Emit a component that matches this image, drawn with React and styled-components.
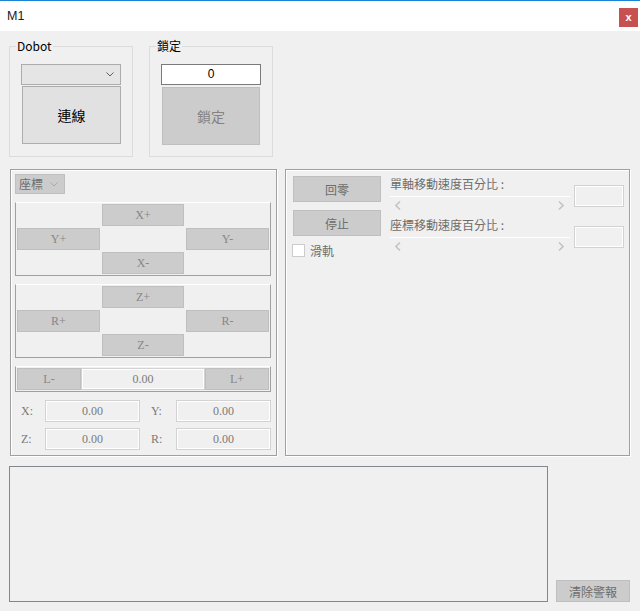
import React from 'react';
import styled, { createGlobalStyle } from 'styled-components';

const GlobalStyle = createGlobalStyle`
  * { box-sizing: border-box; }
  html, body {
    margin: 0;
    padding: 0;
    background: #f0f0f0;
  }
  body {
    font-family: "Noto Sans CJK TC", "Liberation Sans", sans-serif;
    font-size: 12px;
    color: #000;
  }
`;

const Window = styled.div`
  width: 640px;
  height: 611px;
  display: flex;
  flex-direction: column;
  overflow: hidden;
  background: #f0f0f0;
`;

const TitleBar = styled.div`
  flex: none;
  height: 31px;
  border-top: 1px solid #1883d7;
  background: #fff;
  display: flex;
  align-items: center;
  justify-content: space-between;
  padding: 0 2px 0 7px;
`;

const Title = styled.span`
  font-family: "Liberation Sans", sans-serif;
  font-size: 12.5px;
  color: #1a1a1a;
`;

const CloseButton = styled.button`
  width: 19px;
  height: 19px;
  margin-top: 3px;
  padding: 0;
  border: none;
  background: #c75050;
  color: #fff;
  font-family: "Liberation Sans", sans-serif;
  font-weight: bold;
  font-size: 11px;
  line-height: 19px;
`;

const Body = styled.div`
  flex: 1;
  display: flex;
  flex-direction: column;
  padding: 7px 10px 9px 9px;
`;

const TopRow = styled.div`
  display: flex;
  gap: 16px;
`;

const Group = styled.fieldset`
  width: 124px;
  margin: 0;
  padding: 0;
  min-width: 0;
  border: 1px solid #dcdcdc;
`;

const Legend = styled.legend`
  margin-left: 6px;
  padding: 0 1px;
  font-size: 12px;
  line-height: 16px;
`;

const GroupInner = styled.div`
  display: flex;
  flex-direction: column;
  padding: 10px 11px 11px 11px;
`;

const Combo = styled.div`
  width: ${p => p.$w || 100}px;
  height: ${p => p.$h || 21}px;
  display: flex;
  align-items: center;
  justify-content: space-between;
  padding: 0 6px 0 3px;
  background: ${p => (p.$disabled ? '#cccccc' : '#e5e5e5')};
  border: 1px solid ${p => (p.$disabled ? '#bfbfbf' : '#acacac')};
  color: #6d6d6d;
  font-size: 12px;
  line-height: 16px;
`;

const BigButton = styled.button`
  width: ${p => p.$w}px;
  height: 58px;
  margin: ${p => p.$m};
  padding: 0;
  font-family: "Noto Sans CJK TC", sans-serif;
  font-size: 14px;
  background: ${p => (p.disabled ? '#cccccc' : '#e1e1e1')};
  border: 1px solid ${p => (p.disabled ? '#bfbfbf' : '#adadad')};
  color: ${p => (p.disabled ? '#838383' : '#000')};
`;

const LockInput = styled.div`
  width: 100px;
  height: 21px;
  background: #fff;
  border: 1px solid #7a7a7a;
  text-align: center;
  font-family: "Liberation Sans", sans-serif;
  font-size: 12px;
  line-height: 19px;
`;

const MiddleRow = styled.div`
  display: flex;
  margin-top: 12px;
  height: 287px;
`;

const Panel = styled.div`
  width: ${p => p.$w}px;
  margin-left: ${p => p.$ml}px;
  border: 1px solid #a0a0a0;
  box-shadow: inset 1px 1px 0 #fff, 1px 1px 0 #fff;
  padding: ${p => p.$pad};
  display: flex;
  flex-direction: ${p => p.$dir || 'column'};
`;

const Inset = styled.div`
  border: 1px solid #a0a0a0;
  border-top-color: #fff;
  padding: 1px;
  margin-top: ${p => p.$mt}px;
`;

const Pad = styled.div`
  display: grid;
  grid-template-columns: 83px 82px 83px;
  grid-template-rows: repeat(3, 22px);
  gap: 2px;
`;

const JogButton = styled.button`
  grid-column: ${p => p.$col};
  grid-row: ${p => p.$row};
  width: ${p => (p.$w ? `${p.$w}px` : 'auto')};
  height: 22px;
  padding: 0;
  background: #cccccc;
  border: 1px solid #bfbfbf;
  color: #878787;
  font-family: "Liberation Serif", serif;
  font-size: 12px;
`;

const LRow = styled.div`
  display: flex;
`;

const Field = styled.div`
  width: ${p => p.$w}px;
  height: 22px;
  background: #f0f0f0;
  border: 1px solid #d2d2d2;
  box-shadow: inset 0 0 0 1px #fff;
  color: #7a7a7a;
  text-align: center;
  font-family: "Liberation Serif", serif;
  font-size: 12px;
  line-height: 20px;
`;

const CoordRow = styled.div`
  display: grid;
  grid-template-columns: 30px 95px 36px 95px;
  align-items: center;
  margin-top: ${p => p.$mt}px;
`;

const CoordLabel = styled.span`
  padding-left: ${p => p.$pl}px;
  color: #7a7a7a;
  font-family: "Liberation Serif", serif;
  font-size: 12px;
`;

const SideColumn = styled.div`
  width: 88px;
  display: flex;
  flex-direction: column;
  gap: 8px;
`;

const ActionButton = styled.button`
  width: ${p => p.$w || 88}px;
  height: ${p => p.$h || 26}px;
  padding: 0;
  background: #cccccc;
  border: 1px solid #bfbfbf;
  color: #6d6d6d;
  font-family: "Noto Sans CJK TC", sans-serif;
  font-size: 12px;
`;

const CheckRow = styled.label`
  display: flex;
  align-items: center;
  height: 13px;
  margin-left: -1px;
  color: #6d6d6d;
  font-size: 12px;
  line-height: 13px;
`;

const CheckBox = styled.span`
  width: 13px;
  height: 13px;
  background: #fff;
  border: 1px solid #cccccc;
  margin-right: 5px;
`;

const SpeedColumn = styled.div`
  display: flex;
  flex-direction: column;
  gap: 4px;
  margin-left: 9px;
`;

const SpeedBlock = styled.div`
  display: flex;
  align-items: flex-start;
`;

const SpeedMain = styled.div`
  width: 180px;
  display: flex;
  flex-direction: column;
`;

const SpeedLabel = styled.div`
  line-height: 16px;
  color: #6d6d6d;
  font-size: 12px;
`;

const ScrollBar = styled.div`
  height: 17px;
  margin-top: 4px;
  border-top: 1px solid #fff;
  display: flex;
  align-items: center;
  justify-content: space-between;
  padding: 0 6px 0 5px;
`;

const SpeedBox = styled.div`
  width: 50px;
  height: 22px;
  margin: 9px 0 0 4px;
  background: #f0f0f0;
  border: 1px solid #d2d2d2;
  box-shadow: inset 0 0 0 1px #fff;
`;

const BottomRow = styled.div`
  display: flex;
  align-items: flex-end;
  gap: 8px;
  margin-top: 10px;
  height: 136px;
`;

const LogBox = styled.div`
  width: 540px;
  height: 136px;
  border: 1px solid #828790;
  background: #f0f0f0;
`;

const Chevron = ({ color }) => (
  <svg width="8" height="5" viewBox="0 0 8 5" style={{ flex: 'none' }}>
    <polyline points="0.5,0.5 4,4 7.5,0.5" fill="none" stroke={color} strokeWidth="1" />
  </svg>
);

const Arrow = ({ dir }) => (
  <svg width="6" height="9" viewBox="0 0 6 9">
    <polyline
      points={dir === 'left' ? '5,0.5 1,4.5 5,8.5' : '1,0.5 5,4.5 1,8.5'}
      fill="none"
      stroke="#c4c4c4"
      strokeWidth="1.6"
    />
  </svg>
);

function JogPad({ top, left, right, bottom, mt }) {
  return (
    <Inset $mt={mt}>
      <Pad>
        <JogButton $col={2} $row={1}>{top}</JogButton>
        <JogButton $col={1} $row={2}>{left}</JogButton>
        <JogButton $col={3} $row={2}>{right}</JogButton>
        <JogButton $col={2} $row={3}>{bottom}</JogButton>
      </Pad>
    </Inset>
  );
}

function Speed({ label }) {
  return (
    <SpeedBlock>
      <SpeedMain>
        <SpeedLabel>{label}</SpeedLabel>
        <ScrollBar>
          <Arrow dir="left" />
          <Arrow dir="right" />
        </ScrollBar>
      </SpeedMain>
      <SpeedBox />
    </SpeedBlock>
  );
}

export default function App() {
  return (
    <Window>
      <GlobalStyle />
      <TitleBar>
        <Title>M1</Title>
        <CloseButton>x</CloseButton>
      </TitleBar>

      <Body>
        <TopRow>
          <Group>
            <Legend>Dobot</Legend>
            <GroupInner>
              <Combo>
                <span />
                <Chevron color="#606060" />
              </Combo>
              <BigButton $w={99} $m="1px 0 0 1px">連線</BigButton>
            </GroupInner>
          </Group>
          <Group>
            <Legend>鎖定</Legend>
            <GroupInner>
              <LockInput>0</LockInput>
              <BigButton $w={98} $m="2px 0 0 1px" disabled>鎖定</BigButton>
            </GroupInner>
          </Group>
        </TopRow>

        <MiddleRow>
          <Panel $w={267} $ml={1} $pad="4px 5px 5px 4px">
            <Combo $w={50} $h={20} $disabled>
              <span>座標</span>
              <Chevron color="#a9a9a9" />
            </Combo>
            <JogPad top="X+" left="Y+" right="Y-" bottom="X-" mt={8} />
            <JogPad top="Z+" left="R+" right="R-" bottom="Z-" mt={8} />
            <Inset $mt={8}>
              <LRow>
                <JogButton $w={64}>L-</JogButton>
                <Field $w={124}>0.00</Field>
                <JogButton $w={64}>L+</JogButton>
              </LRow>
            </Inset>
            <CoordRow $mt={8}>
              <CoordLabel $pl={6}>X:</CoordLabel>
              <Field $w={95}>0.00</Field>
              <CoordLabel $pl={11}>Y:</CoordLabel>
              <Field $w={95}>0.00</Field>
            </CoordRow>
            <CoordRow $mt={6}>
              <CoordLabel $pl={6}>Z:</CoordLabel>
              <Field $w={95}>0.00</Field>
              <CoordLabel $pl={11}>R:</CoordLabel>
              <Field $w={95}>0.00</Field>
            </CoordRow>
          </Panel>

          <Panel $w={346} $ml={8} $pad="6px 5px 5px 7px" $dir="row">
            <SideColumn>
              <ActionButton>回零</ActionButton>
              <ActionButton>停止</ActionButton>
              <CheckRow>
                <CheckBox />
                滑軌
              </CheckRow>
            </SideColumn>
            <SpeedColumn>
              <Speed label="單軸移動速度百分比 :" />
              <Speed label="座標移動速度百分比 :" />
            </SpeedColumn>
          </Panel>
        </MiddleRow>

        <BottomRow>
          <LogBox />
          <ActionButton $w={74} $h={22}>清除警報</ActionButton>
        </BottomRow>
      </Body>
    </Window>
  );
}
